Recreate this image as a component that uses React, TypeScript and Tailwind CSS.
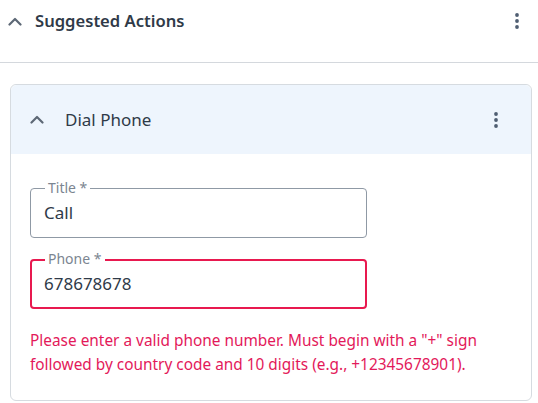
import React from "react";

const Chevron = ({ className }: { className?: string }) => (
  <svg width="14" height="9" viewBox="0 0 14 9" className={className}>
    <path d="M1.5 7.5 L7 2 L12.5 7.5" fill="none" stroke="currentColor" strokeWidth="2.2" strokeLinecap="round" strokeLinejoin="round" />
  </svg>
);

const Dots = ({ className }: { className?: string }) => (
  <svg width="6" height="18" viewBox="0 0 6 18" className={className}>
    <circle cx="3" cy="3" r="1.9" fill="currentColor" />
    <circle cx="3" cy="9" r="1.9" fill="currentColor" />
    <circle cx="3" cy="15" r="1.9" fill="currentColor" />
  </svg>
);

const Field = ({ label, value, error }: { label: string; value: string; error?: boolean }) => (
  <div
    className={`relative h-[50px] w-[337px] rounded-[4px] flex items-center ${
      error ? "border-[2px] border-[#e8194f] pl-[12px]" : "border border-[#8f99a5] pl-[13px]"
    }`}
  >
    <span
      className={`absolute ${error ? "-top-[10px] left-[13px]" : "-top-[9px] left-[14px]"} bg-white px-[3px] text-[14px] leading-[16px] text-[#7b8591]`}
    >
      {label}
    </span>
    <div className="text-[17px] leading-[24px] text-[#2f3a48]">{value}</div>
  </div>
);

export default function App() {
  return (
    <div
      className="w-[538px] h-[403px] overflow-hidden bg-white"
      style={{ fontFamily: '"Noto Sans", "Open Sans", sans-serif' }}
    >
      <div className="h-[42px] flex items-center pl-[8px] pr-[18px]">
        <Chevron className="text-[#5d6876]" />
        <span className="ml-[13px] text-[16.6px] font-semibold text-[#2f3a48]">Suggested Actions</span>
        <Dots className="ml-auto text-[#4f5e72]" />
      </div>
      <div className="h-[21px] border-b border-[#d4d8dd]" />
      <div className="pt-[21px] pl-[10px] pr-[6px]">
        <div className="h-[317px] rounded-[6px] border border-[#d6dbe0]">
          <div className="h-[69px] flex items-center bg-[#eef5fd] rounded-t-[6px] pl-[19px] pr-[32px]">
            <Chevron className="text-[#5d6876]" />
            <span className="ml-[21px] text-[17px] text-[#2f3a48]">Dial Phone</span>
            <Dots className="ml-auto text-[#4f5e72]" />
          </div>
          <div className="pl-[19px] pt-[34px] flex flex-col gap-[21px]">
            <Field label="Title *" value="Call" />
            <Field label="Phone *" value="678678678" error />
          </div>
          <p className="pl-[19px] mt-[20px] text-[15.4px] leading-[24px] text-[#e3195a]">
            Please enter a valid phone number. Must begin with a "+" sign
            <br />
            followed by country code and 10 digits (e.g., +12345678901).
          </p>
        </div>
      </div>
    </div>
  );
}
